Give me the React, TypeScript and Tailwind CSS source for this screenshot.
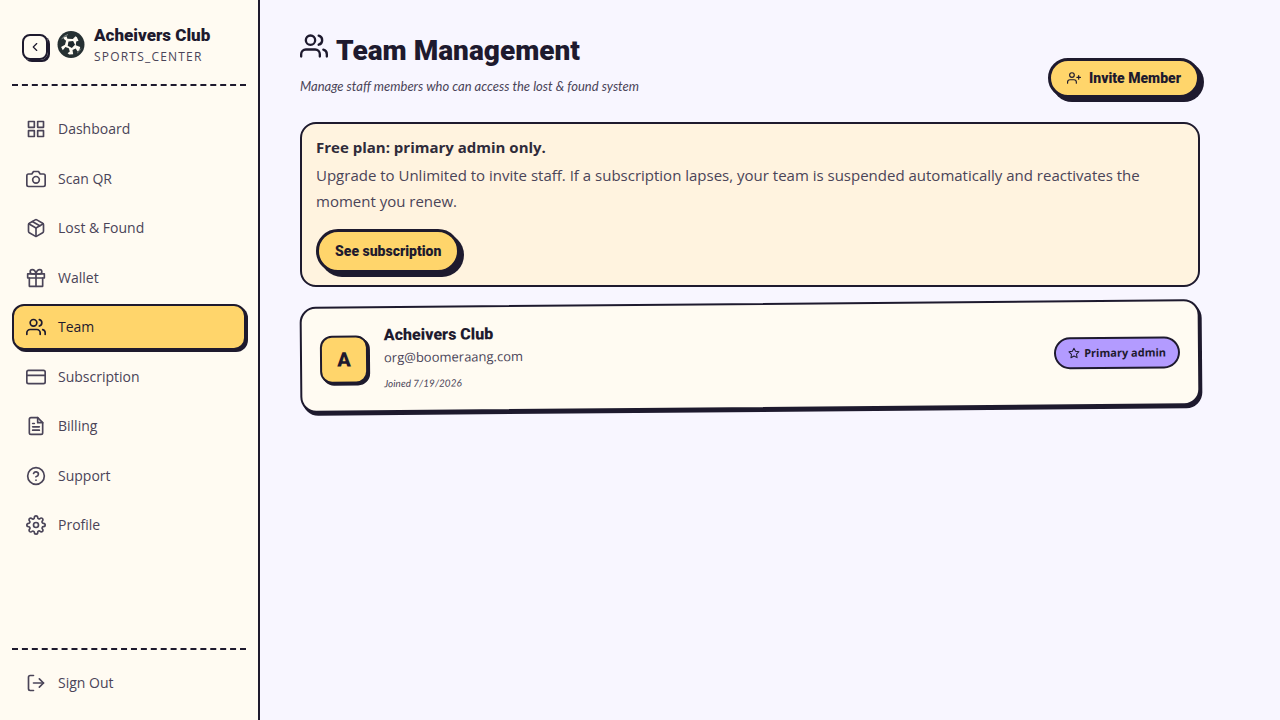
import type { ReactNode } from "react"
import {
    FiCamera,
    FiChevronLeft,
    FiCreditCard,
    FiFileText,
    FiGift,
    FiGrid,
    FiHelpCircle,
    FiLogOut,
    FiPackage,
    FiSettings,
    FiStar,
    FiUserPlus,
    FiUsers,
} from "react-icons/fi"

const NAV_ITEMS = [
    { label: "Dashboard", icon: FiGrid },
    { label: "Scan QR", icon: FiCamera },
    { label: "Lost & Found", icon: FiPackage },
    { label: "Wallet", icon: FiGift },
    { label: "Team", icon: FiUsers, active: true },
    { label: "Subscription", icon: FiCreditCard },
    { label: "Billing", icon: FiFileText },
    { label: "Support", icon: FiHelpCircle },
    { label: "Profile", icon: FiSettings },
]

function ClubLogo() {
    return (
        <svg viewBox="0 0 28 28" className="size-7 shrink-0" aria-hidden="true">
            <circle cx="14" cy="13.500" r="13.500" fill="#263032" />
            {/* white panels radiating from the centre patch */}
            <path
                fill="#fffbf2"
                d="M6.200 6.800l3.300-1.600.9 2.600 5.400.2 2.700-2.700 1.400 1 1.600 3.400-2.300.8-.4 3.800 4.400 1.600-.8 3-1.800 1.700-1.900-3.200-3.200 1.600.7 4.300-4 .2-1.600-1.200 2.200-1.800-1-3.300-3.400-1.200-2.600 3.200-1.700-3.200 3.900-2.200 1.100-4-1.600-1.200z"
            />
            <path d="M11.500 10.600l4.600-.5 1.900 3.600-3.200 3.300-4.100-2.300z" fill="#1f282b" />
            <path d="M4.600 8.200a10.800 10.800 0 0 1 6.400-4.700" stroke="#9aa3a0" strokeWidth=".8" fill="none" />
            <path d="M24 17.500a10.800 10.800 0 0 1-4 4.700" stroke="#7d8785" strokeWidth=".7" fill="none" />
        </svg>
    )
}

function PillButton({ children, className }: { children: ReactNode; className: string }) {
    return (
        <button
            type="button"
            className={`flex items-center gap-2 rounded-full border-[3px] border-[#1e1a2e] bg-[#ffd56b] px-4 font-['Roboto',sans-serif] text-sm font-black shadow-[4px_4px_0_#1e1a2e] ${className}`}
        >
            {children}
        </button>
    )
}

function Sidebar() {
    return (
        <aside className="flex w-65 shrink-0 flex-col border-r-2 border-[#1e1a2e] bg-[#fffbf2] px-3">
            <div className="flex h-[86px] items-center gap-[9px] border-b-2 border-dashed border-[#1e1a2e] pt-1.5 pl-2.5">
                <button
                    type="button"
                    aria-label="Collapse sidebar"
                    className="mt-1 flex size-[26px] shrink-0 items-center justify-center rounded-lg border-2 border-[#1e1a2e] shadow-[2px_2px_0_#1e1a2e]"
                >
                    <FiChevronLeft size={14} />
                </button>
                <ClubLogo />
                <div>
                    <p className="font-['Roboto',sans-serif] text-[17px] leading-6 font-black">Acheivers Club</p>
                    <p className="text-xs leading-5 font-medium tracking-widest text-[#4a4458]">SPORTS_CENTER</p>
                </div>
            </div>

            <nav className="flex-1 pt-5">
                <ul className="flex h-[442px] flex-col justify-between">
                    {NAV_ITEMS.map(({ label, icon: Icon, active }) => (
                        <li key={label}>
                            <a
                                href="#"
                                aria-current={active ? "page" : undefined}
                                className={`flex h-[46px] items-center gap-3 rounded-xl border-2 px-3 text-sm font-medium ${
                                    active
                                        ? "border-[#1e1a2e] bg-[#ffd56b] shadow-[2px_2px_0_#1e1a2e]"
                                        : "border-transparent text-[#4a4458]"
                                }`}
                            >
                                <Icon size={20} />
                                {label}
                            </a>
                        </li>
                    ))}
                </ul>
            </nav>

            <div className="border-t-2 border-dashed border-[#1e1a2e] pt-3 pb-4">
                <button
                    type="button"
                    className="flex w-full items-center gap-3 px-3.5 py-[9px] text-sm leading-6 font-medium text-[#4a4458]"
                >
                    <FiLogOut size={20} />
                    Sign Out
                </button>
            </div>
        </aside>
    )
}

function PlanNotice() {
    return (
        <section className="rounded-2xl border-2 border-[#1e1a2e] bg-[#fff3df] px-3.5 pt-2 pb-3">
            <h2 className="text-[15px] leading-[30px] font-bold text-[#2f2b3a]">Free plan: primary admin only.</h2>
            <p className="mb-[15px] text-[15px] leading-[26px] text-[#4a4458]">
                Upgrade to Unlimited to invite staff. If a subscription lapses, your team is suspended automatically and
                reactivates the moment you renew.
            </p>
            <PillButton className="h-11">See subscription</PillButton>
        </section>
    )
}

function MemberCard() {
    return (
        <article className="flex h-[106px] -rotate-[0.5deg] items-center gap-4 rounded-2xl border-2 border-[#1e1a2e] bg-[#fffbf2] px-[18px] shadow-[2px_3px_0_#1e1a2e]">
            <div className="flex size-12 items-center justify-center rounded-xl border-2 border-[#1e1a2e] bg-[#ffd56b] font-['Roboto',sans-serif] text-xl font-black shadow-[2px_2px_0_#1e1a2e]">
                A
            </div>
            <div className="flex-1">
                <h3 className="font-['Roboto',sans-serif] text-base leading-6 font-black">Acheivers Club</h3>
                <p className="text-[13px] leading-5 text-[#4a4458]">org@boomeraang.com</p>
                <p className="mt-1 font-['Lato',sans-serif] text-[10px] leading-6 text-[#4a4458] italic">
                    Joined 7/19/2026
                </p>
            </div>
            <span className="flex h-8 items-center gap-1 rounded-full border-2 border-[#1e1a2e] bg-[#b39bff] px-3 text-[11px] font-bold">
                <FiStar size={12} />
                Primary admin
            </span>
        </article>
    )
}

export default function App() {
    return (
        <div className="flex min-h-screen bg-[#f8f6ff] font-['Open_Sans',sans-serif] text-[#1e1a2e]">
            <Sidebar />
            <main className="min-w-0 flex-1 px-10 pt-7">
                <div className="max-w-[900px]">
                    <header className="mb-6 flex items-end justify-between">
                        <div>
                            <h1 className="flex items-start gap-2 font-['Roboto',sans-serif] text-[28px] leading-[46px] font-black">
                                <FiUsers size={28} className="mt-1" />
                                Team Management
                            </h1>
                            <p className="font-['Lato',sans-serif] text-[13px] leading-6 text-[#4a4458] italic">
                                Manage staff members who can access the lost &amp; found system
                            </p>
                        </div>
                        <PillButton className="h-10">
                            <FiUserPlus size={14} />
                            Invite Member
                        </PillButton>
                    </header>
                    <div className="flex flex-col gap-4">
                        <PlanNotice />
                        <MemberCard />
                    </div>
                </div>
            </main>
        </div>
    )
}
